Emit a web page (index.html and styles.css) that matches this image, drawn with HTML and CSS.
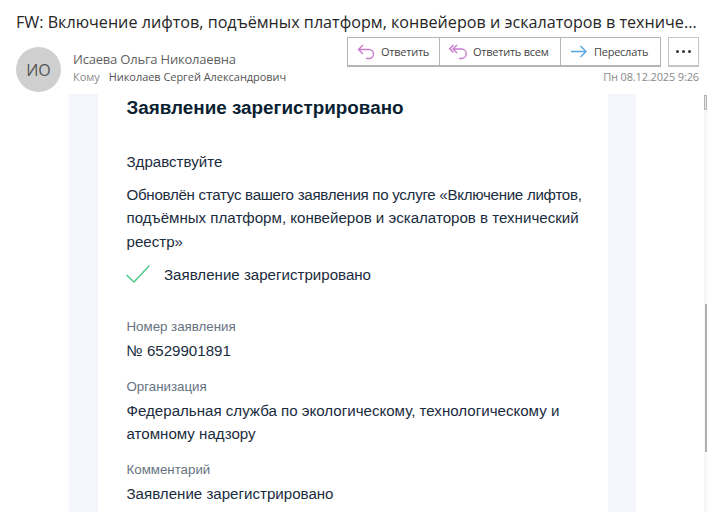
FILE: index.html

```html
<!DOCTYPE html>
<html>
<head>
  <title>FW: Включение лифтов</title>
  <link rel="stylesheet" href="styles.css">
</head>
<body>
  <header class="msg-head">
    <h1 class="subject">FW: Включение лифтов, подъёмных платформ, конвейеров и эскалаторов в техниче...</h1>
    <div class="head-row">
      <div class="avatar">ИО</div>
      <div class="people">
        <div class="sender">Исаева Ольга Николаевна</div>
        <div class="to"><span class="to-label">Кому</span>Николаев Сергей Александрович</div>
      </div>
      <div class="head-right">
        <div class="actions">
          <div class="btn-group">
            <button class="btn btn-reply">
              <svg width="18" height="18" viewBox="0 0 18 18" fill="none" stroke="#c77ccf" stroke-width="1.4"><path d="M6 2 1.500 6.500 6 11M1.500 6.500H12a4.500 4.500 0 0 1 0 9H9"/></svg>
              Ответить
            </button>
            <button class="btn btn-replyall">
              <svg width="18" height="18" viewBox="0 0 18 18" fill="none" stroke="#c77ccf" stroke-width="1.4"><path d="M4.500 2 .8 5.800 4.500 9.500M8 2 4 6 8 10M4 6H12.500a4.700 4.700 0 0 1 0 9.500H10"/></svg>
              Ответить всем
            </button>
            <button class="btn btn-forward">
              <svg width="18" height="18" viewBox="0 0 18 18" fill="none" stroke="#5aa7e0" stroke-width="1.4"><path d="M10.500 3 16 8.500 10.500 14M16 8.500H1"/></svg>
              Переслать
            </button>
          </div>
          <button class="btn-more" aria-label="Ещё"><span></span><span></span><span></span></button>
        </div>
        <div class="msg-date">Пн 08.12.2025 9:26</div>
      </div>
    </div>
  </header>

  <div class="msg-body">
    <div class="mail-bg">
      <div class="mail-card">
        <h2 class="mail-title">Заявление зарегистрировано</h2>
        <p class="hello">Здравствуйте</p>
        <p class="intro"><span class="intro-tight">Обновлён статус вашего заявления по услуге «Включение лифтов,</span> подъёмных платформ, конвейеров и эскалаторов в технический реестр»</p>
        <div class="status">
          <svg width="24" height="20" viewBox="0 0 24 20" fill="none" stroke="#4cc98a" stroke-width="1.500"><path d="M.5 10 8 17 23.500 .5"/></svg>
          <span>Заявление зарегистрировано</span>
        </div>
        <div class="field">
          <div class="field-label">Номер заявления</div>
          <div class="field-value">№ 6529901891</div>
        </div>
        <div class="field">
          <div class="field-label">Организация</div>
          <div class="field-value">Федеральная служба по экологическому, технологическому и атомному надзору</div>
        </div>
        <div class="field">
          <div class="field-label">Комментарий</div>
          <div class="field-value">Заявление зарегистрировано</div>
        </div>
      </div>
    </div>
    <div class="scroll-track">
      <div class="scroll-btn"></div>
      <div class="scroll-thumb"></div>
    </div>
  </div>
</body>
</html>
```

FILE: styles.css

```css
html, body { height: 100%; }
body { margin: 0; height: 512px; overflow: hidden; background: #fff; display: flex; flex-direction: column; font-family: "Open Sans", sans-serif; color: #262626; }

.msg-head { padding: 10px 8px 0 16px; height: 94px; box-sizing: border-box; flex: none; }
.subject { margin: 0; font-size: 16.15px; font-weight: 400; line-height: 24px; white-space: nowrap; color: #262626; }
.head-row { display: flex; margin-top: 3px; }
.avatar { width: 45px; height: 45px; margin-top: 10px; border-radius: 50%; background: #cfcfcf; color: #555; font-size: 16px; display: flex; align-items: center; justify-content: center; flex: none; }
.people { margin-left: 12px; padding-top: 13px; flex: 1; }
.sender { font-size: 13px; letter-spacing: -0.2px; line-height: 18px; color: #616161; }
.to { font-size: 11px; letter-spacing: -0.05px; line-height: 18px; color: #555; }
.to-label { color: #8a8a8a; margin-right: 9px; }
.head-right { display: flex; flex-direction: column; align-items: flex-end; }
.actions { display: flex; gap: 7px; }
.btn-group { display: flex; border: 1px solid #b5b5b5; border-bottom-width: 2px; height: 30px; box-sizing: border-box; }
.btn { display: flex; align-items: center; gap: 6px; padding: 0 0 0 9px; border: 0; border-left: 1px solid #b5b5b5; background: #fff; font: 11px "Open Sans", sans-serif; letter-spacing: -0.25px; color: #444; }
.btn:first-child { border-left: 0; }
.btn-reply { width: 91px; }
.btn-replyall { width: 121px; }
.btn-forward { width: 100px; }
.btn-more { width: 31px; height: 30px; box-sizing: border-box; border: 1px solid #c4c4c4; border-bottom-width: 2px; background: #fff; display: flex; align-items: center; justify-content: center; gap: 3px; padding: 0; }
.btn-more span { width: 3px; height: 3px; border-radius: 50%; background: #333; }
.msg-date { margin-top: 2px; font-size: 11px; letter-spacing: -0.15px; line-height: 16px; color: #8a8a8a; }

.msg-body { flex: 1; display: flex; min-height: 0; overflow: hidden; }
.mail-bg { width: 567px; margin-left: 69px; padding: 0 28px 0 29px; box-sizing: border-box; background: #f4f6fb; }
.mail-card { background: #fff; height: 100%; padding: 0 24.5px 0 28.5px; font-family: "Liberation Sans", sans-serif; color: #1a2c3e; font-size: 15.1px; line-height: 23.5px; }
.mail-title { margin: 0; font-size: 18.85px; line-height: 28px; font-weight: 700; color: #0b1f33; }
.hello { margin: 28px 0 0; }
.intro { margin: 9px 0 0; }
.intro-tight { letter-spacing: -0.28px; }
.status { display: flex; align-items: center; gap: 14px; height: 24px; margin: 10px 0 0 -0.5px; }
.field { margin-top: 14px; }
.status + .field { margin-top: 30px; }
.field-label { font-size: 13.3px; line-height: 20px; color: #66727f; }
.field-value { margin-top: 2px; }
.scroll-track { margin-left: auto; width: 3px; padding-top: 1px; background: #f6f6f6; }
.scroll-btn { height: 15px; box-sizing: border-box; border: 1px solid #b5b5b5; background: #e4e4e4; }
.scroll-thumb { margin-top: 194px; margin-left: 1px; height: 148px; background: #b0b0b0; }
```
